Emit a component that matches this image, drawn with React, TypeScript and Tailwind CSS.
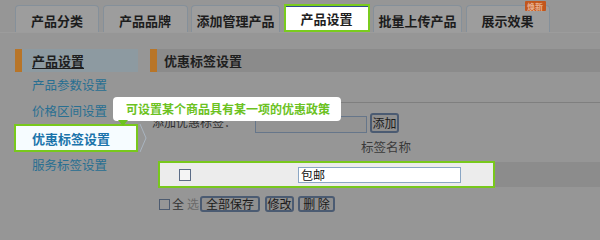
import React from "react";

const tabs = [
  { label: "产品分类", w: "w-[84px]" },
  { label: "产品品牌", w: "w-[85px]" },
  { label: "添加管理产品", w: "w-[89px]" },
  { label: "产品设置", w: "w-[86px]", active: true },
  { label: "批量上传产品", w: "w-[89px]" },
  { label: "展示效果", w: "w-[84px]", badge: true },
];

const sideItems = ["产品参数设置", "价格区间设置", "优惠标签设置", "服务标签设置"];

export default function App() {
  return (
    <div className="relative w-[600px] h-[240px] overflow-hidden bg-[#969696] font-['Noto_Sans_CJK_SC',sans-serif] text-[12px] leading-none text-[#2a2a2a]">
      {/* Tabs */}
      <div className="flex items-end gap-[3.5px] pl-[15px] pt-[5px] h-[33px] border-b border-[#9c9c9c]">
        {tabs.map((t) =>
          t.active ? (
            <div
              key={t.label}
              className={`${t.w} h-[28px] border-2 border-[#7acb1e] bg-white flex flex-col`}
            >
              <div className="h-[1px] bg-[#2f4d8e]" />
              <div className="flex-1 flex items-center justify-center text-[13px] font-bold text-[#1e1e1e]">
                {t.label}
              </div>
            </div>
          ) : (
            <div
              key={t.label}
              className={`${t.w} relative h-[27px] rounded-t-[4px] border border-b-0 border-[#85909a] bg-[#9d9d9d] flex items-center justify-center pt-[2px] text-[13px] font-bold text-[#1c1c1c]`}
            >
              {t.label}
              {t.badge && (
                <div className="absolute left-[58px] top-[-5px] w-[21px] h-[10px] bg-[#c2561c] rounded-[1px] text-[8px] leading-[9px] text-[#e8b090] flex items-center justify-center">
                  焕新
                </div>
              )}
            </div>
          )
        )}
      </div>

      {/* Body */}
      <div className="flex mt-[16px]">
        {/* Sidebar */}
        <div className="ml-[15px] w-[123px] flex flex-col">
          <div className="h-[23px] bg-[#8d9aa1] border-l-[7px] border-[#b87528] flex items-center pl-[10px]">
            <span className="text-[13px] font-bold underline underline-offset-2 text-[#1e1e1e]">产品设置</span>
          </div>
          {sideItems.map((s) =>
            s === "优惠标签设置" ? (
              <div
                key={s}
                className="relative -ml-[1px] w-[124px] h-[28px] border-2 border-[#78c81c] bg-[#f6fcff] flex items-center pl-[16px] text-[13px] font-bold text-[#1b74ab]"
              >
                {s}
                <svg className="absolute left-[123px] top-[-2px]" width="10" height="28" viewBox="0 0 10 28">
                  <polyline points="1,0 7,14 1,28" fill="none" stroke="#a9b4bf" strokeWidth="1" />
                </svg>
              </div>
            ) : (
              <div key={s} className="h-[26px] flex items-center pl-[17px] text-[12.5px] text-[#286f92]">
                {s}
              </div>
            )
          )}
        </div>

        {/* Main */}
        <div className="ml-[12px] flex-1 flex flex-col">
          <div className="h-[23px] bg-[#8b8b8b] border-l-[7px] border-[#b87528] flex items-center pl-[7px]">
            <span className="text-[13px] font-bold text-[#1e1e1e]">优惠标签设置</span>
          </div>
          <div className="h-[31px] border-b border-[#7f7f7f]" />

          <div className="flex items-start mt-[10px] h-[20px]">
            <span className="ml-[2px] w-[103px] mt-[3px] text-[12px] text-[#2e2e2e]">添加优惠标签：*</span>
            <div className="w-[112px] h-[17px] mt-[3px] border border-[#66768a] bg-[#939393]" />
            <div className="ml-[3px] w-[29px] h-[20px] border-2 border-[#4b5b72] rounded-[3px] bg-[#8f8f8f] flex items-center justify-center text-[12px] text-[#1a1a1a]">
              添加
            </div>
          </div>

          <div className="mt-[8px] h-[14px] pl-[211px] text-[12.5px] text-[#3a3a3a]">标签名称</div>

          <div className="mt-[6px] ml-[8px] flex items-center">
            <div className="w-[337px] h-[27px] border-2 border-[#78c81c] bg-[#ececec] flex items-center">
              <div className="ml-[19px] w-[12px] h-[12px] border border-[#5b6c86] bg-[#f4f4f4]" />
              <div className="ml-[107px] w-[163px] h-[16px] border border-[#8aa6c4] bg-white flex items-center pl-[2px] text-[12px] text-[#111]">
                包邮
              </div>
            </div>
            <div className="flex-1 h-[25px] bg-[#8c8c8c]" />
          </div>

          <div className="mt-[8px] ml-[9px] flex items-center h-[16px]">
            <div className="w-[11px] h-[11px] border border-[#4d5b70]" />
            <span className="ml-[2px] text-[12px] text-[#333]">全</span>
            <span className="ml-[3px] text-[12px] text-[#6a6a6a]">选</span>
            <div className="ml-[1px] w-[60px] h-[16px] border-2 border-[#4b5b72] rounded-[3px] bg-[#8f8f8f] flex items-center justify-center text-[12px] text-[#1a1a1a]">
              全部保存
            </div>
            <div className="ml-[5px] w-[29px] h-[16px] border-2 border-[#4b5b72] rounded-[3px] bg-[#8f8f8f] flex items-center justify-center text-[12px] text-[#1a1a1a]">
              修改
            </div>
            <div className="ml-[4px] w-[37px] h-[16px] border-2 border-[#4b5b72] rounded-[3px] bg-[#8f8f8f] flex items-center justify-center text-[12px] text-[#1a1a1a]">
              删 除
            </div>
          </div>
        </div>
      </div>

      {/* Tooltip */}
      <div className="absolute left-[113px] top-[97px] w-[228px] h-[24px] rounded-[4px] bg-white flex items-center pl-[13px] text-[12px] font-bold text-[#6cc21f]">
        可设置某个商品具有某一项的优惠政策
      </div>
      <div className="absolute left-[118px] top-[120px] w-0 h-0 border-l-[5px] border-r-[5px] border-t-[6px] border-l-transparent border-r-transparent border-t-[#6cc21f]" />
    </div>
  );
}
